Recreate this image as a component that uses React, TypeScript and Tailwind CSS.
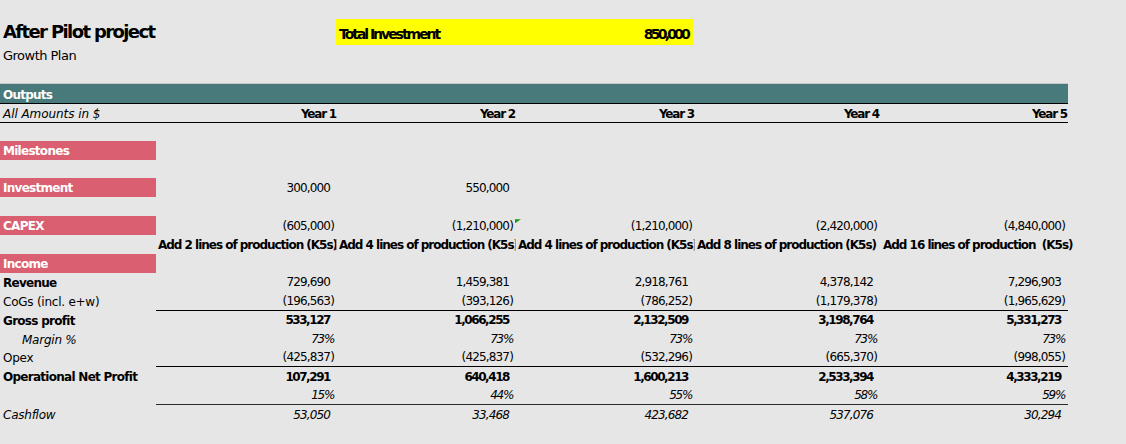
import React from 'react';

// column widths for the five year columns
const W = ['w-[181px]', 'w-[179px]', 'w-[179px]', 'w-[185px]', 'w-[188px]'];

const Row: React.FC<{ children: React.ReactNode; h?: string }> = ({ children, h = 'h-[18.9px]' }) => (
  <div className={`flex w-[1068px] ${h}`}>{children}</div>
);

const Label: React.FC<{ children?: React.ReactNode; pink?: boolean; className?: string }> = ({ children, pink, className = '' }) => (
  <div
    className={`w-[156px] shrink-0 h-full flex items-center pl-[3px] pt-px whitespace-nowrap ${
      pink ? 'bg-[#d95f71] text-white font-bold tracking-[-0.06em]' : ''
    } ${className}`}
  >
    {children}
  </div>
);

const Nums: React.FC<{ vals: string[]; style?: string; line?: boolean }> = ({ vals, style = 'tracking-[-0.07em]', line }) => (
  <>
    {vals.map((v, k) => (
      <div
        key={k}
        className={`${W[k]} shrink-0 h-full flex items-center justify-end pr-[3px] whitespace-nowrap ${
          line ? 'border-b border-black' : ''
        } ${style}`}
      >
        {v}
        {v && !v.startsWith('(') && !v.endsWith('%') && <span className="invisible">)</span>}
      </div>
    ))}
  </>
);

const adds = [
  'Add 2 lines of production (K5s)',
  'Add 4 lines of production (K5s)',
  'Add 4 lines of production (K5s)',
  'Add 8 lines of production (K5s)',
  'Add 16 lines of production  (K5s)',
];

export default function App() {
  return (
    <div className="w-[1126px] h-[444px] overflow-hidden bg-[#e6e6e6] text-black font-['DejaVu_Sans',sans-serif]">
      {/* header area */}
      <div className="h-[83px] flex">
        <div className="w-[336px] shrink-0 pl-[3px] pt-[21px]">
          <div className="text-[18px] leading-[22px] font-bold tracking-[-0.09em]">After Pilot project</div>
          <div className="mt-[5px] text-[13px] leading-[16px] tracking-[-0.04em]">Growth Plan</div>
        </div>
        <div className="mt-[19px] h-[26px] w-[357px] bg-[#ffff00] flex items-center justify-between pl-[3px] pr-[5px] pt-[5px] text-[14px] font-bold">
          <span className="tracking-[-0.145em]">Total Investment</span>
          <span className="tracking-[-0.2em]">850,000</span>
        </div>
      </div>
      <div className="w-[1068px] h-px bg-[#c8c8c8]" />

      {/* table */}
      <div className="text-[12px] tracking-[-0.02em]">
        <div className="w-[1068px] h-[20px] flex items-center pl-[3px] pt-[2px] bg-[#487a7b] border-b border-black text-white font-bold tracking-[-0.065em]">
          Outputs
        </div>
        <div className="flex w-[1068px] h-[19px] border-b border-black">
          <Label className="italic tracking-[-0.005em]">All Amounts in $</Label>
          {['Year 1', 'Year 2', 'Year 3', 'Year 4', 'Year 5'].map((y, k) => (
            <div key={y} className={`${W[k]} shrink-0 h-full flex items-center justify-end pr-[1px] pt-px font-bold tracking-[-0.1em]`}>
              {y}
            </div>
          ))}
        </div>
        <div className="h-[17.7px]" />

        <Row>
          <Label pink>Milestones</Label>
        </Row>
        <Row>
          <Label />
        </Row>
        <Row>
          <Label pink>Investment</Label>
          <Nums vals={['300,000', '550,000', '', '', '']} />
        </Row>
        <Row>
          <Label />
        </Row>
        <Row>
          <Label pink>CAPEX</Label>
          {['(605,000)', '(1,210,000)', '(1,210,000)', '(2,420,000)', '(4,840,000)'].map((v, k) => (
            <div key={k} className={`${W[k]} shrink-0 h-full flex items-center justify-end pr-[3px] tracking-[-0.07em] relative`}>
              {v}
              {k === 1 && (
                <span className="absolute right-[-5px] top-[3px] w-[6px] h-[4px] bg-[#139a13] [clip-path:polygon(0_0,100%_0,0_100%)]" />
              )}
            </div>
          ))}
        </Row>
        <Row>
          <Label />
          {adds.map((t, k) => (
            <div
              key={k}
              className={`${W[k]} shrink-0 h-full flex items-center whitespace-pre font-bold tracking-[-0.085em] relative ${
                k === 4 ? 'overflow-visible pl-[3px]' : 'overflow-hidden pl-[2px]'
              }`}
            >
              {t}
              {k < 3 && <span className="absolute right-0 top-[4px] h-[11px] w-px bg-[#9a9a9a]" />}
            </div>
          ))}
        </Row>
        <Row>
          <Label pink>Income</Label>
        </Row>
        <Row>
          <Label className="font-bold tracking-[-0.06em]">Revenue</Label>
          <Nums vals={['729,690', '1,459,381', '2,918,761', '4,378,142', '7,296,903']} />
        </Row>
        <Row>
          <Label>CoGs (incl. e+w)</Label>
          <Nums vals={['(196,563)', '(393,126)', '(786,252)', '(1,179,378)', '(1,965,629)']} line />
        </Row>
        <Row>
          <Label className="font-bold tracking-[-0.06em]">Gross profit</Label>
          <Nums vals={['533,127', '1,066,255', '2,132,509', '3,198,764', '5,331,273']} style="font-bold tracking-[-0.12em]" />
        </Row>
        <Row>
          <Label className="italic pl-[22px]">Margin %</Label>
          <Nums vals={['73%', '73%', '73%', '73%', '73%']} style="italic tracking-[-0.11em]" />
        </Row>
        <Row>
          <Label>Opex</Label>
          <Nums vals={['(425,837)', '(425,837)', '(532,296)', '(665,370)', '(998,055)']} line />
        </Row>
        <Row>
          <Label className="font-bold tracking-[-0.06em]">Operational Net Profit</Label>
          <Nums vals={['107,291', '640,418', '1,600,213', '2,533,394', '4,333,219']} style="font-bold tracking-[-0.12em]" />
        </Row>
        <Row>
          <Label />
          <Nums vals={['15%', '44%', '55%', '58%', '59%']} style="italic tracking-[-0.11em] border-b border-[#2a2a2a]" />
        </Row>
        <Row>
          <Label className="italic">Cashflow</Label>
          <Nums vals={['53,050', '33,468', '423,682', '537,076', '30,294']} style="italic tracking-[-0.07em]" />
        </Row>
      </div>
    </div>
  );
}
